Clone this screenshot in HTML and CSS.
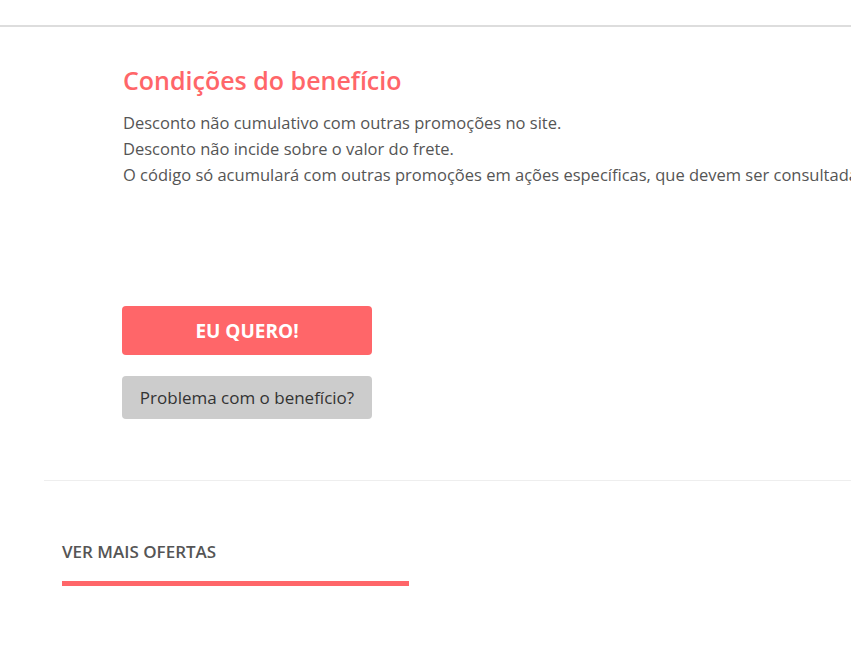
FILE: index.html
```html
<!DOCTYPE html>
<html lang="pt-BR">
<head>
    <meta charset="UTF-8">
    <meta name="viewport" content="width=device-width, initial-scale=1.0">
    <title>Condições do benefício</title>
    <link rel="stylesheet" href="styles.css">
</head>
<body>
    <div class="top-bar"></div>
    <div class="benefit">
        <h2 class="benefit-title">Condições do benefício</h2>
        <div class="benefit-text">
            <p>Desconto não cumulativo com outras promoções no site.</p>
            <p>Desconto não incide sobre o valor do frete.</p>
            <p>O código só acumulará com outras promoções em ações específicas, que devem ser consultadas no regulamento.</p>
        </div>
        <div class="actions">
            <a class="btn btn-primary" href="#">EU QUERO!</a>
            <a class="btn btn-secondary" href="#">Problema com o benefício?</a>
        </div>
    </div>
    <hr class="divider">
    <div class="more">
        <h3 class="more-title">VER MAIS OFERTAS</h3>
        <div class="more-bar"></div>
    </div>
</body>
</html>
```

FILE: styles.css
```css
html, body {
    margin: 0;
    padding: 0;
}
body {
    font-family: "Open Sans", "Noto Sans", Arial, sans-serif;
    color: #555;
    background: #fff;
    overflow: hidden;
    padding-top: 25px;
}
.top-bar {
    height: 2px;
    background: #dddddd;
}
.benefit {
    padding: 38px 0 0 123px;
    white-space: nowrap;
    overflow: hidden;
}
.benefit-title {
    margin: 0 0 15px;
    font-size: 25px;
    font-weight: 600;
    color: #ff6669;
    line-height: 30px;
}
.benefit-text p {
    margin: 0;
    font-size: 16.5px;
    line-height: 26px;
    color: #555;
}
.actions {
    margin-top: 118px;
    display: flex;
    flex-direction: column;
    align-items: flex-start;
    gap: 21px;
}
.btn {
    display: flex;
    align-items: center;
    justify-content: center;
    width: 250px;
    border-radius: 4px;
    text-decoration: none;
    margin-left: -1px;
}
.btn-primary {
    height: 49px;
    background: #ff6669;
    color: #fff;
    font-weight: 700;
    font-size: 19px;
}
.btn-secondary {
    height: 43px;
    background: #cccccc;
    color: #333;
    font-size: 17px;
}
.divider {
    border: 0;
    border-top: 1px solid #eeeeee;
    margin: 61px 0 0 44px;
}
.more {
    padding: 60px 0 0 62px;
}
.more-title {
    margin: 0;
    font-size: 17px;
    font-weight: 600;
    color: #555;
    line-height: 22px;
}
.more-bar {
    margin-top: 18px;
    width: 347px;
    height: 5px;
    background: #ff6669;
}
```
